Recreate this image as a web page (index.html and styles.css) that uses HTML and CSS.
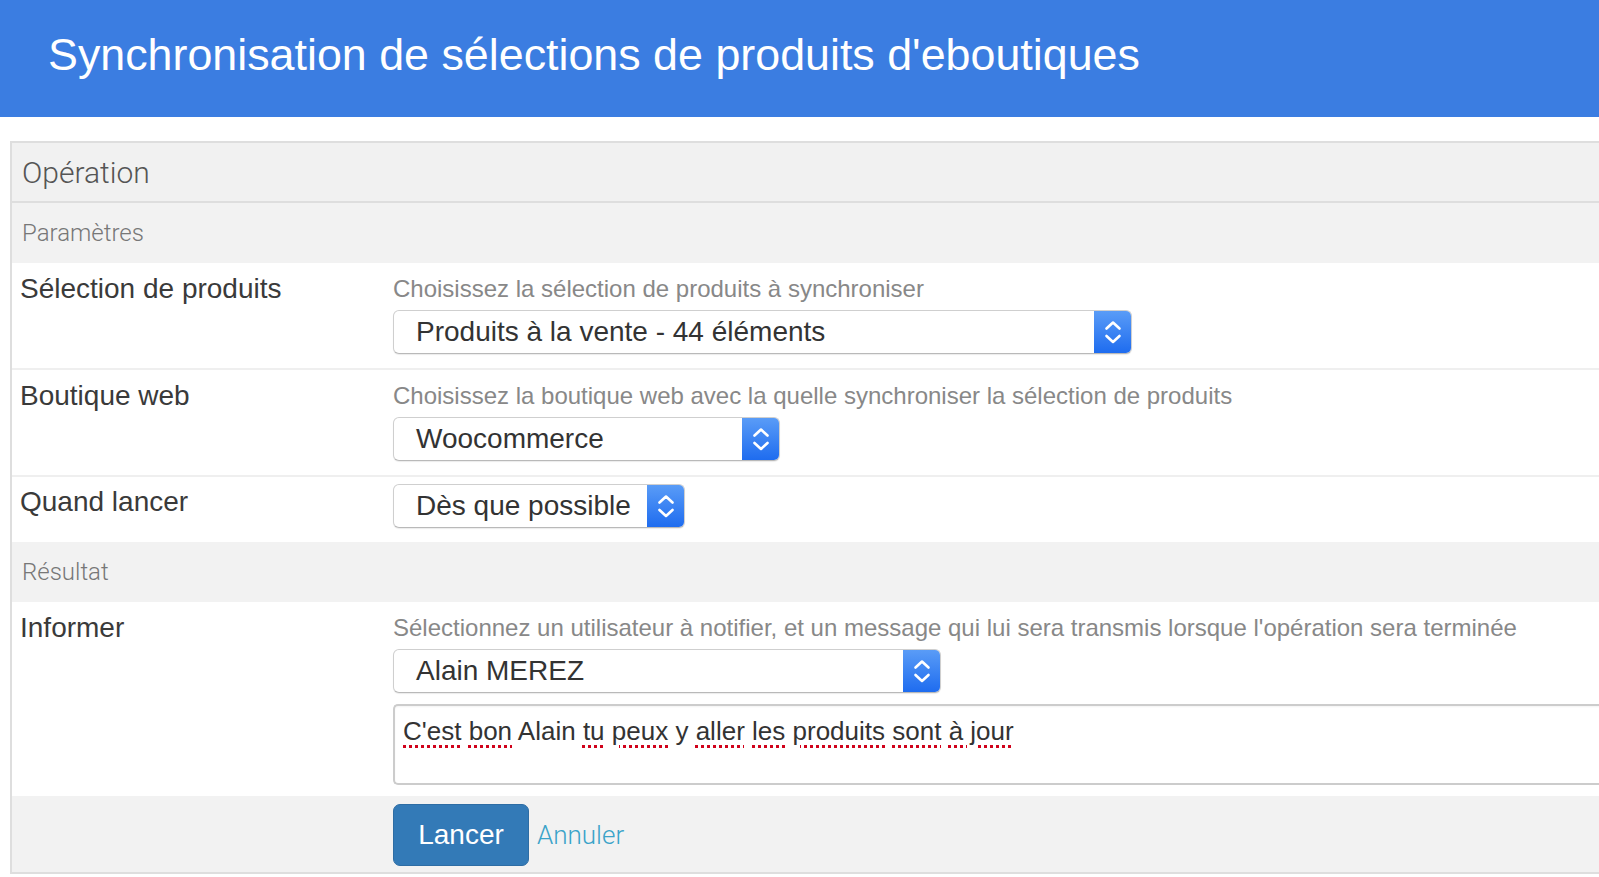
FILE: index.html
```html
<!DOCTYPE html>
<html lang="fr">
<head>
<meta charset="utf-8">
<title>Synchronisation</title>
<link rel="stylesheet" href="styles.css">
</head>
<body>
<header class="topbar">
  <h1 class="title">Synchronisation de sélections de produits d'eboutiques</h1>
</header>
<main class="panel">
  <div class="panel-heading">Opération</div>

  <div class="section">Paramètres</div>
  <div class="row">
    <div class="label">Sélection de produits</div>
    <div class="field">
      <div class="help">Choisissez la sélection de produits à synchroniser</div>
      <div class="select select-wide">
        <span class="select-text">Produits à la vente - 44 éléments</span>
        <span class="stepper"><svg viewBox="0 0 38 44" width="38" height="44"><path d="M12.5 18.5 L19 12.5 L25.5 18.5 M12.5 26 L19 32 L25.5 26" fill="none" stroke="#fff" stroke-width="2.6" stroke-linecap="round" stroke-linejoin="round"/></svg></span>
      </div>
    </div>
  </div>
  <div class="row">
    <div class="label">Boutique web</div>
    <div class="field">
      <div class="help">Choisissez la boutique web avec la quelle synchroniser la sélection de produits</div>
      <div class="select select-shop">
        <span class="select-text">Woocommerce</span>
        <span class="stepper"><svg viewBox="0 0 38 44" width="38" height="44"><path d="M12.5 18.5 L19 12.5 L25.5 18.5 M12.5 26 L19 32 L25.5 26" fill="none" stroke="#fff" stroke-width="2.6" stroke-linecap="round" stroke-linejoin="round"/></svg></span>
      </div>
    </div>
  </div>
  <div class="row row-last row-compact">
    <div class="label">Quand lancer</div>
    <div class="field">
      <div class="select select-when">
        <span class="select-text">Dès que possible</span>
        <span class="stepper"><svg viewBox="0 0 38 44" width="38" height="44"><path d="M12.5 18.5 L19 12.5 L25.5 18.5 M12.5 26 L19 32 L25.5 26" fill="none" stroke="#fff" stroke-width="2.6" stroke-linecap="round" stroke-linejoin="round"/></svg></span>
      </div>
    </div>
  </div>

  <div class="section">Résultat</div>
  <div class="row row-last row-inform">
    <div class="label">Informer</div>
    <div class="field">
      <div class="help">Sélectionnez un utilisateur à notifier, et un message qui lui sera transmis lorsque l'opération sera terminée</div>
      <div class="select select-user">
        <span class="select-text">Alain MEREZ</span>
        <span class="stepper"><svg viewBox="0 0 38 44" width="38" height="44"><path d="M12.5 18.5 L19 12.5 L25.5 18.5 M12.5 26 L19 32 L25.5 26" fill="none" stroke="#fff" stroke-width="2.6" stroke-linecap="round" stroke-linejoin="round"/></svg></span>
      </div>
      <div class="textarea"><span class="spell">C'est</span> <span class="spell">bon</span> Alain <span class="spell">tu</span> <span class="spell">peux</span> y <span class="spell">aller</span> <span class="spell">les</span> <span class="spell">produits</span> <span class="spell">sont</span> <span class="spell">à jour</span></div>
    </div>
  </div>

  <div class="footer">
    <button class="btn-primary" type="button">Lancer</button>
    <a class="link" href="#">Annuler</a>
  </div>
</main>
</body>
</html>
```
FILE: styles.css
```css
html, body {
  margin: 0;
  padding: 0;
  background: #fff;
  overflow: hidden;
}
body {
  font-family: "Liberation Sans", Arial, sans-serif;
  color: #333;
}
.topbar {
  background: #3b7de1;
  height: 117px;
  display: flex;
  align-items: center;
}
.title {
  margin: 0 0 0 48px;
  font-weight: 400;
  font-size: 44.8px;
  color: #fff;
  line-height: 1;
  padding-bottom: 8px;
}
.panel {
  display: block;
  margin: 24px -40px 0 10px;
  border: 2px solid #dedede;
  border-right: none;
}
.panel-heading {
  background: #f1f1f1;
  height: 58px;
  display: flex;
  align-items: center;
  padding-left: 10px;
  font-family: Roboto, "Liberation Sans", sans-serif;
  font-weight: 300;
  font-size: 30px;
  color: #555;
  border-bottom: 2px solid #dedede;
}
.section {
  background: #f2f2f2;
  height: 60px;
  display: flex;
  align-items: center;
  padding-left: 10px;
  font-family: Roboto, "Liberation Sans", sans-serif;
  font-weight: 300;
  font-size: 24px;
  color: #777;
}
.row {
  display: flex;
  padding: 11px 0 14px 0;
  border-bottom: 2px solid #efefef;
}
.row-last {
  border-bottom: none;
}
.row-compact {
  padding: 7px 0 14px 0;
}
.row-inform {
  padding-bottom: 11px;
}
.label {
  width: 373px;
  padding-left: 8px;
  flex-shrink: 0;
  font-size: 28px;
  line-height: 30px;
  color: #3a3a3a;
}
.row-compact .label {
  padding-top: 3px;
}
.field {
  flex: 1;
  display: flex;
  flex-direction: column;
  align-items: flex-start;
}
.help {
  font-size: 24px;
  line-height: 30px;
  color: #888;
  margin-bottom: 6px;
}
.select {
  display: flex;
  height: 44px;
  box-sizing: border-box;
  border: 1px solid #cfcfcf;
  border-bottom-color: #b9b9b9;
  border-radius: 6px;
  background: #fff;
  box-shadow: 0 1px 1px rgba(0,0,0,0.08);
  overflow: hidden;
}
.select-wide { width: 739px; }
.select-shop { width: 387px; }
.select-when { width: 292px; }
.select-user { width: 548px; }
.select-text {
  flex: 1;
  padding-left: 22px;
  font-size: 28px;
  line-height: 42px;
  color: #333;
  white-space: nowrap;
}
.stepper {
  width: 38px;
  flex-shrink: 0;
  margin: -1px -1px -1px 0;
  background: linear-gradient(#5b9df7, #1d6bef);
  border-radius: 0 6px 6px 0;
  display: flex;
  align-items: center;
  justify-content: center;
}
.stepper svg {
  display: block;
}
.textarea {
  margin-top: 11px;
  align-self: stretch;
  height: 81px;
  box-sizing: border-box;
  border: 2px solid #cccccc;
  border-right: none;
  border-radius: 5px 0 0 5px;
  padding: 10px 8px 7px;
  font-size: 26px;
  line-height: 30px;
  color: #333;
  box-shadow: inset 0 1px 2px rgba(0,0,0,0.05);
}
.spell {
  text-decoration: underline dotted #d0021b;
  text-decoration-thickness: 3px;
  text-underline-offset: 5px;
}
.footer {
  background: #f2f2f2;
  height: 76px;
  box-sizing: border-box;
  padding: 8px 0 0 381px;
  display: flex;
  align-items: flex-start;
  gap: 8px;
}
.btn-primary {
  width: 136px;
  height: 62px;
  background: #337ab7;
  border: 1px solid #2e6da4;
  border-radius: 7px;
  color: #fff;
  font-family: "Liberation Sans", Arial, sans-serif;
  font-size: 28px;
  padding: 0;
  cursor: pointer;
}
.link {
  font-family: Roboto, "Liberation Sans", sans-serif;
  font-weight: 300;
  font-size: 26px;
  color: #3aa3c9;
  text-decoration: none;
  line-height: 62px;
}
```
